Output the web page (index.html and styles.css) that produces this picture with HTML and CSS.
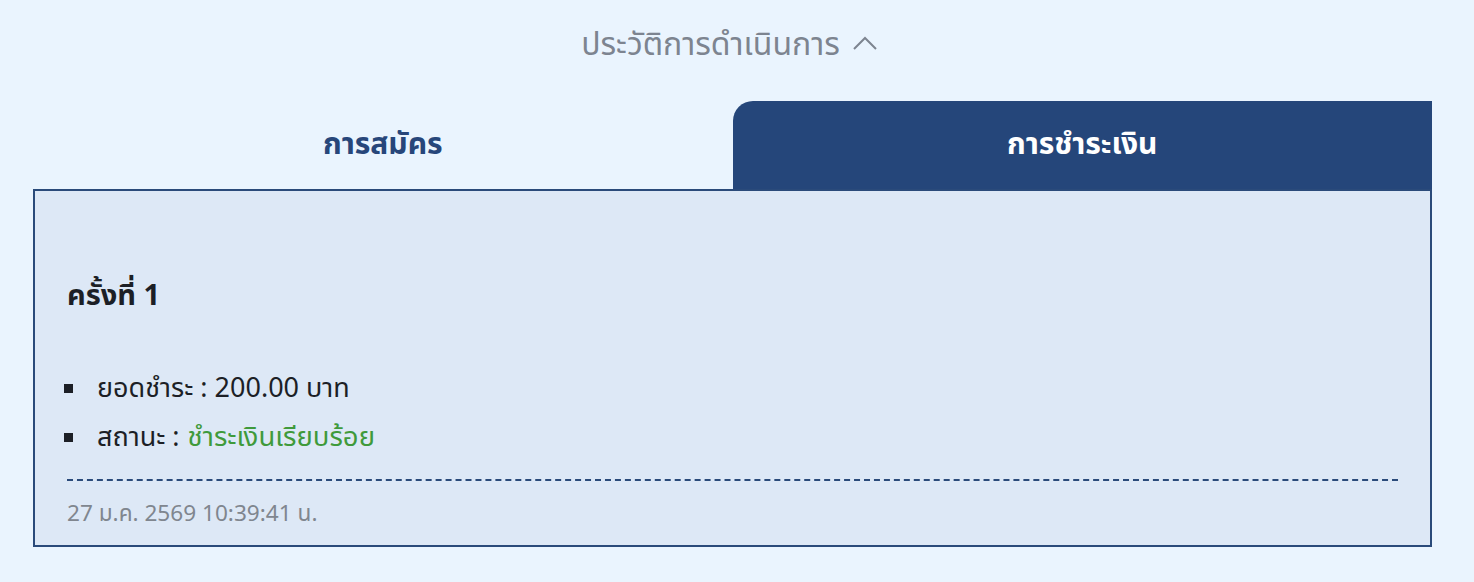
FILE: index.html
```html
<!DOCTYPE html>
<html lang="th">
<head>
<meta charset="utf-8">
<link rel="stylesheet" href="styles.css">
</head>
<body>
<div class="page">
  <div class="history-toggle">
    <span>ประวัติการดำเนินการ</span>
    <svg class="chev" width="26" height="16" viewBox="0 0 26 16"><path d="M2 14 L13 3 L24 14" fill="none" stroke="#7d8490" stroke-width="2"/></svg>
  </div>
  <div class="tabs">
    <div class="tab">การสมัคร</div>
    <div class="tab active">การชำระเงิน</div>
  </div>
  <div class="panel">
    <h2 class="round">ครั้งที่ 1</h2>
    <ul class="details">
      <li>ยอดชำระ : 200.00 บาท</li>
      <li>สถานะ : <span class="ok">ชำระเงินเรียบร้อย</span></li>
    </ul>
    <div class="date">27 ม.ค. 2569 10:39:41 น.</div>
  </div>
</div>
</body>
</html>
```
FILE: styles.css
```css
html, body {
  margin: 0;
  padding: 0;
  background: #eaf4fe;
}
body {
  font-family: "Noto Sans Thai", "Noto Sans", "DejaVu Sans", sans-serif;
  color: #1c1f26;
}
.page {
  padding: 22px 42px 0 33px;
}
.history-toggle {
  display: flex;
  justify-content: center;
  align-items: center;
  gap: 12px;
  color: #7d8490;
  font-size: 32px;
  height: 46px;
  padding-right: 6px;
}
.chev { margin-top: -4px; }
.tabs {
  display: flex;
  margin-top: 33px;
}
.tab {
  flex: 1;
  height: 88px;
  display: flex;
  align-items: center;
  justify-content: center;
  font-size: 30px;
  font-weight: 700;
  color: #27467a;
}
.tab.active {
  background: #25467a;
  color: #ffffff;
  border-top-left-radius: 20px;
}
.panel {
  background: #dde8f6;
  border: 2px solid #2a4a7a;
  padding: 87px 32px 0 32px;
  height: 358px;
  box-sizing: border-box;
}
.round {
  margin: 0;
  font-size: 29px;
  font-weight: 700;
  line-height: 36px;
}
.details {
  list-style: none;
  margin: 50px 0 0 0;
  padding: 0;
}
.details li {
  font-size: 27px;
  line-height: 49px;
  height: 49px;
  display: flex;
  align-items: center;
}
.details li::before {
  content: "";
  width: 9px;
  height: 9px;
  background: #1c1f26;
  margin: 0 24px 0 -3px;
}
.ok {
  color: #3f9a3b;
  margin-left: 8px;
  font-size: 27.5px;
}
.date {
  margin-top: 17px;
  border-top: 2px dashed #2a4a7a;
  padding-top: 18px;
  font-size: 22.6px;
  line-height: 30px;
  color: #80868f;
}
```
